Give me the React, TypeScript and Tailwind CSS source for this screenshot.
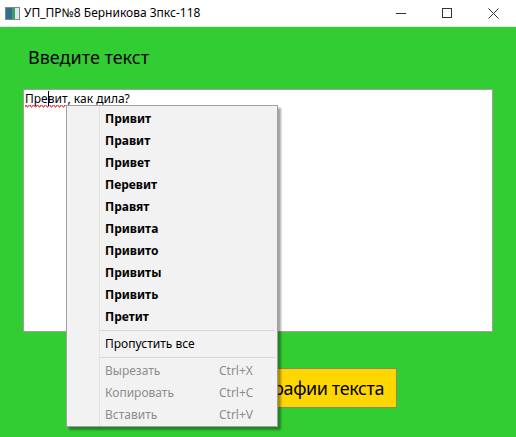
import React from 'react';

const suggestions = [
  'Привит',
  'Правит',
  'Привет',
  'Перевит',
  'Правят',
  'Привита',
  'Привито',
  'Привиты',
  'Привить',
  'Претит',
];

const edits = [
  { label: 'Вырезать', key: 'Ctrl+X' },
  { label: 'Копировать', key: 'Ctrl+C' },
  { label: 'Вставить', key: 'Ctrl+V' },
];

const font = { fontFamily: '"Segoe UI", "Noto Sans", "Open Sans", sans-serif' };

function Squiggle({ width }: { width: number }) {
  // красная волнистая линия проверки орфографии
  let d = 'M0 2';
  for (let x = 0; x < width; x += 2) d += ` L${x + 1} ${x % 4 === 0 ? 0 : 2} L${x + 2} ${x % 4 === 0 ? 2 : 0}`;
  return (
    <svg className="absolute left-0 bottom-[-1px]" width={width} height={3} viewBox={`0 0 ${width} 3`}>
      <path d={d} stroke="#e81123" strokeWidth="0.9" fill="none" />
    </svg>
  );
}

export default function App() {
  return (
    <div className="relative w-[516px] h-[437px] overflow-hidden bg-[#32cd32]" style={font}>
      {/* Title bar */}
      <div className="flex items-center h-[27px] bg-white border-b border-[#e5e5e5]">
        <div className="ml-[5px] w-[15px] h-[13px] flex border border-[#7a8a9a] bg-[#dfe6ee]">
          <div className="w-[6px] bg-[#2e6f8f]" />
          <div className="w-[3px] bg-[#3aa05a]" />
        </div>
        <span className="ml-[4px] text-[12px] text-black leading-none">УП_ПР№8 Берникова 3пкс-118</span>
        <div className="ml-auto flex h-full">
          <div className="w-[46px] flex items-center justify-center">
            <div className="w-[10px] h-px bg-[#333]" />
          </div>
          <div className="w-[46px] flex items-center justify-center">
            <div className="w-[10px] h-[10px] border border-[#333]" />
          </div>
          <div className="w-[46px] flex items-center justify-center">
            <svg width="11" height="11" viewBox="0 0 11 11">
              <path d="M0.5 0.5 L10.5 10.5 M10.5 0.5 L0.5 10.5" stroke="#333" strokeWidth="1" />
            </svg>
          </div>
        </div>
      </div>

      {/* Content */}
      <div className="pl-[28px] pt-[17px] text-[18px] text-black leading-[26px]">Введите текст</div>

      <div className="ml-[23px] mt-[19px] w-[470px] h-[243px] bg-white border border-[#a0a0a0] px-[1px]">
        <div className="text-[12px] leading-[16px] text-black pt-[1px] relative">
          <span className="relative">
            Превит
            <Squiggle width={42} />
          </span>
          , как{' '}
          <span className="relative">
            дила
            <Squiggle width={27} />
          </span>
          ?
          <div className="absolute left-[23px] top-[1px] w-px h-[15px] bg-black" />
        </div>
      </div>

      <div className="ml-[90px] mt-[36px] w-[307px] h-[40px] bg-[#ffd700] border border-[#8a8a6a] flex items-center justify-end pr-[12px] text-[18px] tracking-[-0.4px] text-black whitespace-nowrap">
        Проверка орфографии текста
      </div>

      {/* Context menu */}
      <div className="absolute left-[66px] top-[105px] w-[212px] bg-[#f2f2f2] border border-[#a0a0a0] shadow-[3px_3px_2px_rgba(0,0,0,0.35)] pt-[2px]">
        <div className="absolute left-[32px] top-0 bottom-0 w-px bg-[#e3e3e3]" />
        {suggestions.map((s) => (
          <div key={s} className="h-[22px] flex items-center pl-[38px] text-[12px] font-bold text-black">
            {s}
          </div>
        ))}
        <div className="ml-[33px] mr-[2px] my-[2px] h-px bg-[#d7d7d7]" />
        <div className="h-[22px] flex items-center pl-[38px] text-[12px] text-black">Пропустить все</div>
        <div className="ml-[33px] mr-[2px] my-[2px] h-px bg-[#d7d7d7]" />
        {edits.map((e) => (
          <div key={e.label} className="h-[22px] flex items-center pl-[38px] text-[12px] text-[#8d8d8d]">
            <span>{e.label}</span>
            <span className="ml-auto w-[58px]">{e.key}</span>
          </div>
        ))}
      </div>
    </div>
  );
}
